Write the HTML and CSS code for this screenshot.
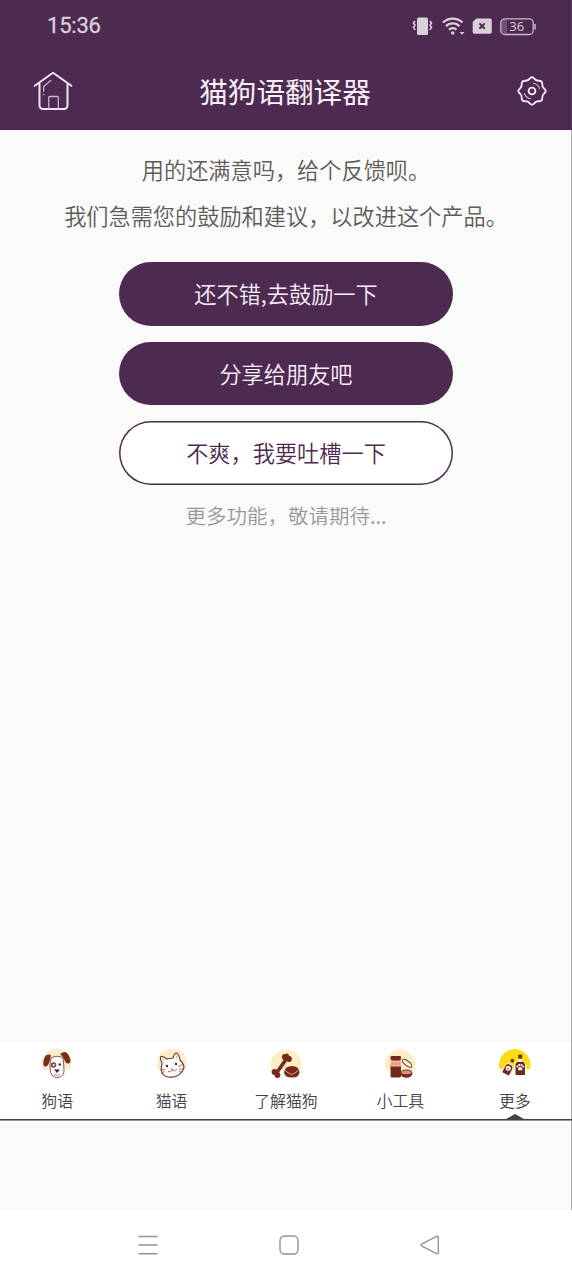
FILE: index.html
```html
<!DOCTYPE html>
<html lang="zh-CN">
<head>
<meta charset="utf-8">
<title>猫狗语翻译器</title>
<link rel="stylesheet" href="styles.css">
</head>
<body>
<div class="screen">
  <header class="header">
    <div class="status">
      <span class="time">15:36</span>
      <svg class="status-icons" width="126" height="24" viewBox="412 13 126 24" fill="none">
        <rect x="417" y="16.500" width="11" height="17.500" rx="1.500" fill="#dccfdc"/>
        <path d="M415 20l-1.500 2 1.500 2-1.500 2 1.500 3M430 20l1.500 2-1.500 2 1.500 2-1.500 3" stroke="#dccfdc" stroke-width="1.600"/>
        <path d="M443 21.500a14 14 0 0 1 19.500 0M446 25.200a9.500 9.500 0 0 1 13.500 0M449 28.700a5.200 5.200 0 0 1 7.500 0" stroke="#dccfdc" stroke-width="2.300"/>
        <circle cx="452.700" cy="32" r="1.700" fill="#dccfdc"/>
        <path d="M459.500 31h5l-2.500 2.700z" fill="#dccfdc"/>
        <path d="M476.500 17.500H490a1.800 1.800 0 0 1 1.800 1.800V31a1.800 1.800 0 0 1-1.800 1.800H474.500a1.800 1.800 0 0 1-1.800-1.800V21z" fill="#dccfdc"/>
        <path d="M479.400 22.400l5.400 5.400M484.800 22.400l-5.400 5.400" stroke="#4d2a4f" stroke-width="2"/>
        <path d="M507 18.500h-2.500a3 3 0 0 0-3 3v8a3 3 0 0 0 3 3h2.500z" fill="#70516f"/>
        <rect x="500.800" y="17.800" width="32.400" height="15.700" rx="4" stroke="#c9b8ca" stroke-width="1.300"/>
        <path d="M535 23v5.500" stroke="#c9b8ca" stroke-width="1.500"/>
        <text class="battery" x="516.700" y="30.300" text-anchor="middle">36</text>
      </svg>
    </div>
    <div class="titlebar">
      <svg width="40" height="42" viewBox="33 70 40 42" fill="none" stroke="#f1e6f3" stroke-linecap="round" stroke-linejoin="round">
        <path d="M34.800 85.800L53 72.800l18.400 13M39.500 84v21.500a3.500 3.500 0 0 0 3.500 3.500h21a3.500 3.500 0 0 0 3.500-3.500V84" stroke-width="2"/>
        <path d="M48.700 108V97.500a1 1 0 0 1 1-1h7.600a1 1 0 0 1 1 1V108M43.700 91v-4.500l7-6M43.700 94.500v.2" stroke="#c9b4cc" stroke-width="1.300"/>
      </svg>
      <h1 class="title">猫狗语翻译器</h1>
      <svg width="30" height="30" viewBox="-15 -15 30 30" fill="none" stroke="#f1e6f3" stroke-linejoin="round" stroke-linecap="round">
        <path d="M-2.600-12Q0-15.500 2.600-12Q4.500-10 6.600-10.300Q10.500-10.500 10.300-6.600Q10-4.500 12-2.600Q15.500 0 12 2.600Q10 4.500 10.300 6.600Q10.500 10.500 6.600 10.300Q4.500 10 2.600 12Q0 15.500-2.600 12Q-4.500 10-6.600 10.300Q-10.500 10.500-10.300 6.600Q-10 4.500-12 2.600Q-15.500 0-12-2.600Q-10-4.500-10.300-6.600Q-10.500-10.500-6.600-10.300Q-4.500-10-2.600-12Z" stroke-width="1.900"/>
        <circle r="3.400" stroke-width="1.900"/>
        <path d="M1.500-7.800A8 8 0 0 1 7.600-2.500M-7.600 2.500A8 8 0 0 0-1.500 7.800" stroke="#c9b4cc" stroke-width="1.100"/>
      </svg>
    </div>
  </header>

  <main class="content">
    <p class="message">用的还满意吗，给个反馈呗。<br>我们急需您的鼓励和建议，以改进这个产品。</p>
    <div class="actions">
      <button class="btn">还不错,去鼓励一下</button>
      <button class="btn">分享给朋友吧</button>
      <button class="btn btn-outline">不爽，我要吐槽一下</button>
    </div>
    <p class="hint">更多功能，敬请期待...</p>
  </main>

  <nav class="tabs">
    <a class="tab">
      <svg width="34" height="34" viewBox="0 0 34 34">
        <path d="M3 22A15 15 0 1 1 30 22Z" fill="#fdeccb"/>
        <path d="M11 10Q17 6.500 23 10Q24 17 24 24Q22.500 29.500 17 29.500Q12 29 10.500 24Q9 17 11 10Z" fill="#fff" stroke="#8a5a50" stroke-width="1"/>
        <path d="M11 7Q5 4.500 3.500 13Q2.500 18.500 5.500 18.500Q8 19 10 12ZM20 6Q26 1.500 28.500 7Q32 13 29.500 15Q26 17 24 11Q22.500 8 20 6Z" fill="#7b2c1b"/>
        <circle cx="13.500" cy="17" r="2.800" fill="#8a4a3c"/><circle cx="13.700" cy="17" r="1" fill="#fff"/>
        <circle cx="19.800" cy="16.500" r="1.300" fill="#502820"/>
        <path d="M14 21.500h6l-3 3.500z" fill="#402326"/><path d="M14 26.500q3 1.500 6 0" fill="none" stroke="#8a5a50" stroke-width=".7"/>
      </svg>
      <span>狗语</span>
    </a>
    <a class="tab">
      <svg width="34" height="34" viewBox="0 0 34 34">
        <path d="M3.500 22A15 15 0 1 1 30.500 22Z" fill="#fdeccb"/>
        <path d="M7 15Q4.500 10 6 8.500Q8 8 12 11L18 10Q19.500 5 21.500 5Q24 6 25 12Q30 17 28.500 21Q26 27 19 29Q10 30 7 25Q5.500 20 7 15Z" fill="#fffdf9" stroke="#6d3e38" stroke-width="1.200" stroke-linejoin="round"/>
        <path d="M7.500 12l0-2 2.500 1.500zM20.500 9.500l1-2.500 1.500 4z" fill="#eba99a"/>
        <circle cx="12" cy="18" r="1.200" fill="#48272a"/><circle cx="21" cy="16" r="1.200" fill="#48272a"/>
        <path d="M15.500 20.500h3l-1.300 1.800z" fill="#bb6654"/>
        <path d="M17 22q-1 3-4 1.500M17 22q3 2 5-1M5 22l5-.5M6 25.500l4-2M23.500 18.500l5-2.500M24 21l5 0M24 23l3 2" fill="none" stroke="#8b5b50" stroke-width=".8"/>
      </svg>
      <span>猫语</span>
    </a>
    <a class="tab">
      <svg width="34" height="34" viewBox="0 0 34 34">
        <path d="M2.500 22.500A15.500 15.500 0 1 1 31.500 22.500Z" fill="#fcefc4"/>
        <path d="M7.500 25L18 10" stroke="#74291c" stroke-width="3.600"/>
        <g fill="#74291c"><circle cx="15.800" cy="9" r="2.900"/><circle cx="20" cy="11" r="2.900"/><circle cx="18" cy="7.500" r="2"/><circle cx="5.500" cy="24" r="2.900"/><circle cx="8.500" cy="27" r="2.900"/></g>
        <path d="M15 24Q16 18 23 18Q29.500 18 30.500 24Q30.500 29.500 23 29.500Q15 29.500 15 24Z" fill="#74291c"/>
        <path d="M16 22.500q2 .5 3 2.500 2-.5 3.500 2 2-2.500 4-2 1-2 3-2.500" fill="none" stroke="#e9b5a1" stroke-width=".9"/>
      </svg>
      <span>了解猫狗</span>
    </a>
    <a class="tab">
      <svg width="34" height="34" viewBox="0 0 34 34">
        <path d="M2.500 22.500A15.500 15.500 0 1 1 31.500 22.500Z" fill="#fcefc4"/>
        <rect x="7.500" y="8" width="10.500" height="4" rx="1" fill="#74291c"/>
        <path d="M9 12h8l1 4v12q0 1.500-1.500 1.500h-7.500Q7.500 29.500 7.500 28V16z" fill="#74291c"/>
        <rect x="7.500" y="12.500" width="10.500" height="6" fill="#efb39e"/><path d="M10 14.500v2.500M13 14.500v2.500M16 14.500v2.500" stroke="#d97b66"/>
        <path d="M19.500 12Q21 10 25.500 13.500Q30 17 28.500 19Q26.500 20.500 22 16.500Q18.500 13.500 19.500 12Z" fill="#fffaf0" stroke="#8c4939" stroke-width="1.100"/>
        <ellipse cx="23.500" cy="24.500" rx="5.500" ry="2.500" fill="#d99575" stroke="#74291c"/>
        <path d="M17 25q6.500 3 12.500 0q-.5 4.800-6 4.800T17 25Z" fill="#74291c"/>
      </svg>
      <span>小工具</span>
    </a>
    <a class="tab tab-active">
      <svg width="34" height="34" viewBox="0 0 34 34">
        <path d="M1.500 21A15.800 15.800 0 1 1 32 21Z" fill="#fbdd12"/>
        <path d="M17 27.500V16.500q.5-3 3-3.500h4.500q2.500.5 3 3.500v11z" fill="#6f2b20" stroke="#fff" stroke-width="1"/>
        <rect x="20.200" y="6.500" width="4" height="4.200" rx="1" fill="#74291c"/><path d="M20.500 11.200h3.400v2.500h-3.400z" fill="#fff"/>
        <g transform="rotate(27 10.500 20)"><path d="M6.300 27v-8q.5-2.500 2.500-3h3.500q2 .5 2.500 3v8z" fill="#6f2b20" stroke="#fff" stroke-width=".9"/><rect x="8.900" y="10" width="3.400" height="3.400" rx="1" fill="#74291c"/><circle cx="10.500" cy="20.500" r="2.500" fill="#fff"/><circle cx="10.500" cy="21" r="1" fill="#a65549"/></g>
        <path d="M22.200 18.800q2 .7 2.300 2.700-.6 1-2.300.4-1.700.6-2.300-.4.300-2 2.300-2.700Z" fill="#fff"/>
        <g fill="#fff"><circle cx="19.500" cy="18.500" r="1"/><circle cx="21.200" cy="17" r="1"/><circle cx="23.500" cy="17" r="1"/><circle cx="25.200" cy="18.500" r="1"/></g>
      </svg>
      <span>更多</span>
    </a>
  </nav>

  <footer class="sysnav">
    <svg width="22" height="22" viewBox="0 0 22 22" fill="none" stroke="#939393" stroke-width="1.400"><path d="M1.500 2.500h19M1.500 11h19M1.500 19.700h19"/></svg>
    <svg width="22" height="22" viewBox="0 0 22 22" fill="none" stroke="#939393" stroke-width="1.400"><rect x="2" y="2" width="18" height="18" rx="4.500"/></svg>
    <svg width="22" height="22" viewBox="0 0 22 22" fill="none" stroke="#939393" stroke-width="1.400" stroke-linejoin="round"><path d="M2.500 10.200L17.500 2.400Q19.300 1.600 19.300 3.400V18.600Q19.300 20.400 17.500 19.600L2.500 11.800Q1.500 11 2.500 10.200Z"/></svg>
  </footer>
</div>
</body>
</html>
```
FILE: styles.css
```css
* { box-sizing: border-box; }
body {
  margin: 0;
  font-family: "Noto Sans CJK SC", sans-serif;
  font-weight: 350;
  background: #fafafa;
}
.screen {
  position: relative;
  width: 572px;
  height: 1280px;
  display: flex;
  flex-direction: column;
  overflow: hidden;
}
/* Hairline down the right edge of the app window */
.screen::after {
  content: "";
  position: absolute;
  top: 0;
  right: 0;
  width: 1px;
  height: 1210px;
  background: rgba(90, 90, 90, 0.5);
}
.header {
  height: 130px;
  background: #4d2a4f;
  color: #faf0fb;
}
.status {
  height: 51px;
  padding: 1px 34px 0 47px;
  display: flex;
  align-items: center;
  justify-content: space-between;
}
.time {
  font: 400 22px/24px Roboto, sans-serif;
  letter-spacing: -0.2px;
  color: #dccfdc;
  -webkit-text-stroke: 0.3px #dccfdc;
}
.battery {
  font: 13px "Open Sans", sans-serif;
  fill: #dccfdc;
}
.titlebar {
  height: 80px;
  padding: 0 25px 0 33px;
  display: grid;
  grid-template-columns: 40px 1fr 30px;
  align-items: center;
}
.title {
  margin: 0 10px 0 -10px;
  text-align: center;
  font-size: 28.600px;
  line-height: 40px;
  font-weight: 400;
}
.content {
  flex: 1;
  padding-top: 16px;
  display: flex;
  flex-direction: column;
  align-items: center;
}
.message {
  margin: 0 0 24px;
  text-align: center;
  font-size: 22.200px;
  line-height: 46px;
  color: #5c5c58;
  white-space: nowrap;
}
.actions {
  display: flex;
  flex-direction: column;
  gap: 16px;
}
.btn {
  width: 334px;
  height: 63.500px;
  padding: 0 0 1px;
  border: 0;
  border-radius: 32px;
  background: #4d2a4f;
  color: #faf0fb;
  font: 350 22.200px/32px "Noto Sans CJK SC", sans-serif;
}
.btn-outline {
  background: #fff;
  box-shadow: inset 0 0 0 1.500px #4d2a4f;
  color: #4d2a4f;
}
.hint {
  margin: 14px 0 0;
  font-size: 20.500px;
  line-height: 32px;
  color: #999;
}
.tabs {
  height: 77px;
  margin-bottom: 90px;
  display: grid;
  grid-template-columns: repeat(5, 1fr);
  background: #fff;
  border-bottom: 1px solid #444;
  box-shadow: 0 1px #99979a;
}
.tab {
  position: relative;
  padding-top: 5px;
  display: flex;
  flex-direction: column;
  align-items: center;
  gap: 7px;
  font-size: 15.900px;
  line-height: 24px;
  color: #444;
}
.tab-active::after {
  content: "";
  position: absolute;
  bottom: 0;
  border: solid transparent;
  border-width: 0 9px 5px;
  border-bottom-color: #444;
}
.sysnav {
  height: 70px;
  padding: 0 131px 0 137px;
  display: flex;
  align-items: center;
  justify-content: space-between;
  background: #fff;
}
```
